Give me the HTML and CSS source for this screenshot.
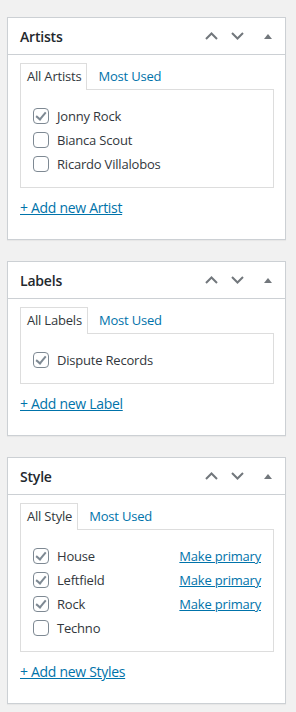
FILE: index.html
```html
<!DOCTYPE html>
<html lang="en">
<head>
  <meta charset="UTF-8">
  <meta name="viewport" content="width=device-width, initial-scale=1.0">
  <title>Taxonomy boxes</title>
  <link rel="stylesheet" href="styles.css">
</head>
<body>
  <div class="postbox">
    <div class="postbox-header">
      <h2>Artists</h2>
      <div class="handle-actions">
        <button class="handle up"><svg width="13" height="8" viewBox="0 0 13 8"><path d="M1 7 L6.5 1.5 L12 7" /></svg></button>
        <button class="handle down"><svg width="13" height="8" viewBox="0 0 13 8"><path d="M1 1 L6.5 6.5 L12 1" /></svg></button>
        <button class="handle toggle"><svg width="8" height="5" viewBox="0 0 8 5"><polygon points="0,5 4,0 8,5" /></svg></button>
      </div>
    </div>
    <div class="inside">
      <ul class="tabs">
        <li class="tab active">All Artists</li>
        <li class="tab"><a href="#">Most Used</a></li>
      </ul>
      <ul class="panel">
        <li><span class="check checked"></span>Jonny Rock</li>
        <li><span class="check"></span>Bianca Scout</li>
        <li><span class="check"></span>Ricardo Villalobos</li>
      </ul>
      <a class="add-new" href="#">+ Add new Artist</a>
    </div>
  </div>

  <div class="postbox">
    <div class="postbox-header">
      <h2>Labels</h2>
      <div class="handle-actions">
        <button class="handle up"><svg width="13" height="8" viewBox="0 0 13 8"><path d="M1 7 L6.5 1.5 L12 7" /></svg></button>
        <button class="handle down"><svg width="13" height="8" viewBox="0 0 13 8"><path d="M1 1 L6.5 6.5 L12 1" /></svg></button>
        <button class="handle toggle"><svg width="8" height="5" viewBox="0 0 8 5"><polygon points="0,5 4,0 8,5" /></svg></button>
      </div>
    </div>
    <div class="inside">
      <ul class="tabs">
        <li class="tab active">All Labels</li>
        <li class="tab"><a href="#">Most Used</a></li>
      </ul>
      <ul class="panel">
        <li><span class="check checked"></span>Dispute Records</li>
      </ul>
      <a class="add-new" href="#">+ Add new Label</a>
    </div>
  </div>

  <div class="postbox">
    <div class="postbox-header">
      <h2>Style</h2>
      <div class="handle-actions">
        <button class="handle up"><svg width="13" height="8" viewBox="0 0 13 8"><path d="M1 7 L6.5 1.5 L12 7" /></svg></button>
        <button class="handle down"><svg width="13" height="8" viewBox="0 0 13 8"><path d="M1 1 L6.5 6.5 L12 1" /></svg></button>
        <button class="handle toggle"><svg width="8" height="5" viewBox="0 0 8 5"><polygon points="0,5 4,0 8,5" /></svg></button>
      </div>
    </div>
    <div class="inside">
      <ul class="tabs">
        <li class="tab active">All Style</li>
        <li class="tab"><a href="#">Most Used</a></li>
      </ul>
      <ul class="panel">
        <li><span class="check checked"></span>House<a class="primary" href="#">Make primary</a></li>
        <li><span class="check checked"></span>Leftfield<a class="primary" href="#">Make primary</a></li>
        <li><span class="check checked"></span>Rock<a class="primary" href="#">Make primary</a></li>
        <li><span class="check"></span>Techno</li>
      </ul>
      <a class="add-new" href="#">+ Add new Styles</a>
    </div>
  </div>
</body>
</html>
```

FILE: styles.css
```css
body {
  margin: 0;
  padding: 17px 10px 10px 7px;
  background: #f1f1f1;
  font-family: "Open Sans", "Noto Sans", sans-serif;
  font-size: 13px;
  letter-spacing: -0.2px;
  color: #32373c;
}
.postbox {
  background: #fff;
  border: 1px solid #ccd0d4;
  box-shadow: 0 1px 1px rgba(0,0,0,0.04);
  margin-bottom: 21px;
}
.postbox-header {
  display: flex;
  align-items: center;
  height: 36px;
  border-bottom: 1px solid #ccd0d4;
}
.postbox-header h2 {
  flex-grow: 1;
  margin: 0;
  padding-left: 12px;
  font-size: 14px;
  font-weight: 600;
  color: #23282d;
}
.handle-actions {
  display: flex;
  height: 100%;
}
.handle {
  border: none;
  background: none;
  padding: 0;
  display: flex;
  align-items: center;
  justify-content: center;
  width: 26px;
  cursor: pointer;
}
.handle.toggle {
  width: 35px;
}
.handle path {
  fill: none;
  stroke: #72777c;
  stroke-width: 2;
}
.handle polygon {
  fill: #72777c;
}
.inside {
  padding: 8px 11px 21px 12px;
}
.tabs {
  display: flex;
  list-style: none;
  margin: 0;
  padding: 0;
}
.tab {
  padding: 3px 5px 4px 6px;
  line-height: 19px;
  border: 1px solid transparent;
  border-bottom: none;
  margin-bottom: -1px;
}
.tab.active {
  border-color: #ddd;
  background: #fff;
  position: relative;
  z-index: 1;
}
.tab a {
  color: #0073aa;
  text-decoration: none;
  padding-left: 4px;
}
.panel {
  list-style: none;
  margin: 0;
  padding: 14px 12px 11px 12px;
  border: 1px solid #ddd;
}
.panel li {
  display: flex;
  align-items: center;
  height: 24px;
}
.check {
  width: 14px;
  height: 14px;
  border: 1px solid #7e8993;
  border-radius: 4px;
  margin-right: 8px;
  box-sizing: content-box;
  position: relative;
}
.check.checked::after {
  content: "";
  position: absolute;
  left: 4px;
  top: 1px;
  width: 4px;
  height: 8px;
  border: solid #7e8993;
  border-width: 0 2px 2px 0;
  transform: rotate(40deg);
}
.primary {
  margin-left: auto;
  color: #0073aa;
}
.add-new {
  display: inline-block;
  margin-top: 9px;
  line-height: 21px;
  color: #0073aa;
  font-size: 14px;
  letter-spacing: -0.3px;
}
```
